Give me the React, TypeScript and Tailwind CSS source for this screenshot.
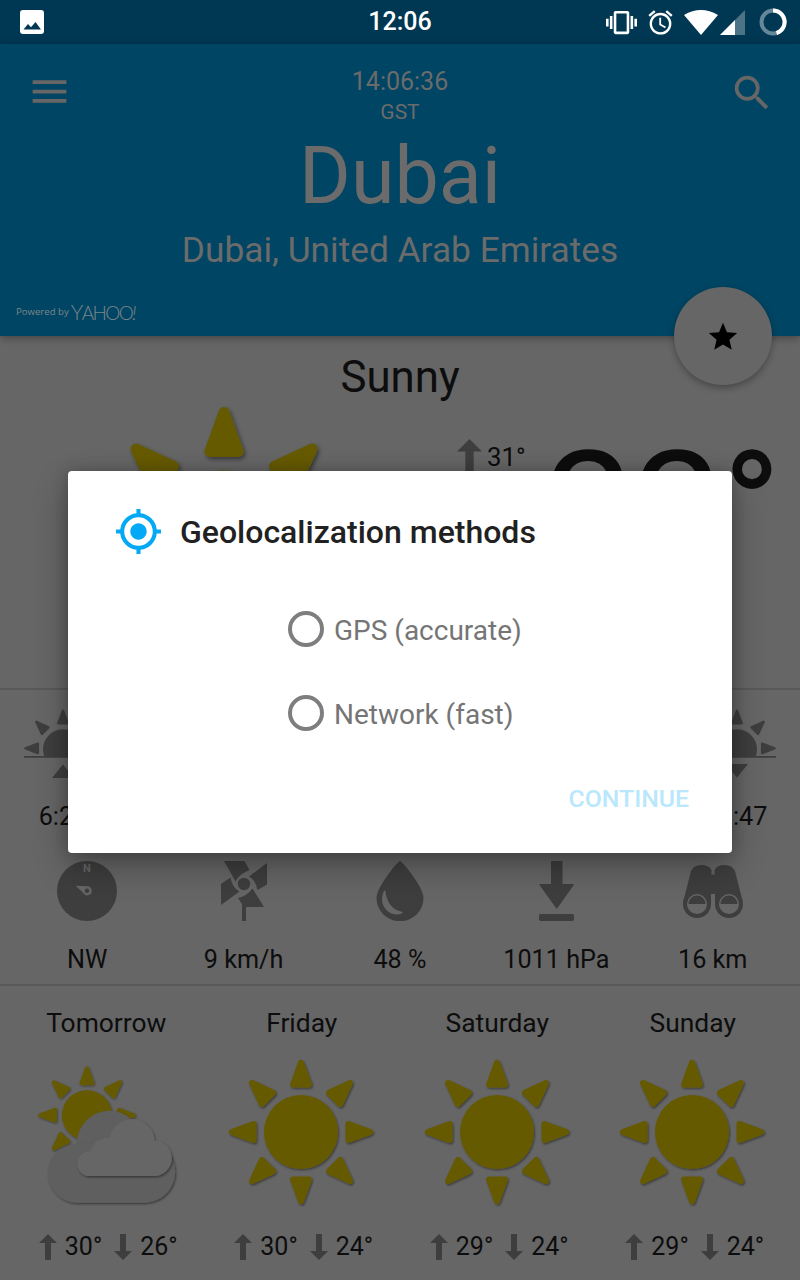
import type { ReactNode } from 'react';
import { MdAlarm, MdMenu, MdMyLocation, MdSearch, MdStar, MdVibration } from 'react-icons/md';

const RAY_ANGLES = [0, 45, 90, 135, 180, 225, 270, 315];

function SunShape({ id, scale = 1 }: { id: string; scale?: number }) {
  return (
    <g transform={`scale(${scale})`} filter={`url(#${id})`} fill="#665a00" stroke="#665a00">
      <circle r="37" stroke="none" />
      {RAY_ANGLES.map((a) => (
        <path
          key={a}
          d="M0-69.2 7.9-47.5H-7.9Z"
          strokeWidth="6"
          strokeLinejoin="round"
          transform={`rotate(${a})`}
        />
      ))}
    </g>
  );
}

function Shadow({ id }: { id: string }) {
  return (
    <filter id={id} x="-20%" y="-20%" width="140%" height="140%">
      <feDropShadow dx="1" dy="1.3" stdDeviation="1.2" floodColor="#000" floodOpacity="0.45" />
    </filter>
  );
}

function Sun({ id, className }: { id: string; className: string }) {
  return (
    <svg viewBox="-75 -75 150 150" className={className}>
      <defs>
        <Shadow id={id} />
      </defs>
      <SunShape id={id} />
    </svg>
  );
}

function PartlyCloudy({ className }: { className: string }) {
  return (
    <svg viewBox="32 1058 150 150" className={className}>
      <defs>
        <Shadow id="pc-sun" />
        <Shadow id="pc-cloud" />
      </defs>
      <g transform="translate(87 1115.3)">
        <SunShape id="pc-sun" scale={0.676} />
      </g>
      <g fill="#5e5e5e" filter="url(#pc-cloud)">
        <circle cx="77.200" cy="1173.200" r="29.500" />
        <circle cx="109.400" cy="1143.500" r="32.700" />
        <circle cx="144.500" cy="1172" r="30.700" />
        <path d="M77.200 1202.700V1143.700H144.500V1202.700Z" />
      </g>
      <g fill="#666666" filter="url(#pc-cloud)">
        <circle cx="89.500" cy="1163.700" r="12.300" />
        <circle cx="107.300" cy="1155" r="17.300" />
        <circle cx="132" cy="1141.700" r="22.700" />
        <circle cx="154" cy="1158.200" r="17.800" />
        <path d="M89.500 1176V1153L110 1145L150 1141L154 1176Z" />
      </g>
    </svg>
  );
}

function Arrow({ down = false, className }: { down?: boolean; className: string }) {
  return (
    <svg viewBox="0 0 18 26" className={className} fill="#3e3e3e">
      <path d={down ? 'M6 0h6v17h6l-9 9-9-9h6Z' : 'M9 0l9 9h-6v17H6V9H0Z'} />
    </svg>
  );
}

function Horizon({ set = false }: { set?: boolean }) {
  return (
    <svg viewBox="0 0 80 70" className="h-[70px] w-20" fill="#3e3e3e" stroke="#3e3e3e">
      <path stroke="none" d="M21.200 48A20 20 0 1 1 58.800 48Z" />
      <path stroke="none" d="M1 48h78v1.800H1Z" />
      {[-90, -45, 0, 45, 90].map((a) => (
        <path
          key={a}
          d="M0-37.500 4.600-25.200H-4.600Z"
          strokeWidth="2.600"
          strokeLinejoin="round"
          transform={`translate(40 40.400) rotate(${a})`}
        />
      ))}
      <path stroke="none" d={set ? 'M29 56h22l-11 13.500Z' : 'M40 56.500l11 13.500H29Z'} />
    </svg>
  );
}

function Compass() {
  return (
    <svg viewBox="0 0 60 60" className="size-[60px]">
      <circle cx="30" cy="30" r="30" fill="#3e3e3e" />
      <text x="30" y="10.800" textAnchor="middle" fontSize="11" fontWeight="700" fill="#666">
        N
      </text>
      <path d="M18.600 24.800 30 25.300A4.500 4.500 0 1 1 26.300 32Z" fill="#666" />
      <circle cx="30" cy="29.800" r="2.200" fill="#3e3e3e" />
    </svg>
  );
}

function Pinwheel() {
  return (
    <svg viewBox="0 0 60 60" className="size-[60px]" fill="#3e3e3e">
      <circle cx="30" cy="23" r="6.200" />
      <path d="M10 0H30.500L35.500 9Q24 14 21.500 20.500Z" />
      <path d="M53 2V23.500L43.500 29Q41.500 19 35 15.500Z" />
      <path d="M7 23 16.500 16.500Q18 26.500 25.500 30.500L7 44Z" />
      <path d="M24 37Q33 35 38.500 27.500L50 46H32V60H28V43Z" />
    </svg>
  );
}

function Drop() {
  return (
    <svg viewBox="0 0 60 60" className="size-[60px]">
      <path
        d="M30 0C32 0 53.500 26 53.500 37A23.500 23.200 0 0 1 6.500 37C6.500 26 28 0 30 0Z"
        fill="#3e3e3e"
      />
      <path
        d="M14.500 29.500C16 29.500 15.500 31 16 34C18.500 44 24 49 31 50.500C33 51 33 52 32 52.500C23 56 13 50 12 39C12 35 13.500 29.500 14.500 29.500Z"
        fill="#666"
      />
    </svg>
  );
}

function Pressure() {
  return (
    <svg viewBox="0 0 60 60" className="size-[60px]" fill="#3e3e3e">
      <path d="M25.500 0H35.500Q36.500 0 36.500 1V23H47.300Q48.300 23 47.700 24L31.500 47Q30.700 48.200 30 47L13.500 24Q13 23 14 23H25V1Q25 0 25.500 0Z" />
      <rect x="13" y="53" width="35" height="7" rx="1.800" />
    </svg>
  );
}

function Binoculars() {
  return (
    <svg viewBox="0 0 60 60" className="size-[60px]" fill="#3e3e3e">
      <path d="M8 10Q11 4 18 4Q26 4 28.500 9V13.500H31.500V9Q34 4 42 4Q49 4 52 10L59.600 40L46 45L32 43V33H28V43L14 45L.4 40Z" />
      <circle cx="14" cy="43" r="14" />
      <circle cx="46" cy="43" r="14" />
      <g fill="#666">
        <circle cx="14" cy="43" r="10" />
        <circle cx="46" cy="43" r="10" />
      </g>
      <path d="M5.500 43a8.500 8.500 0 0 1 17 0ZM37.500 43a8.500 8.500 0 0 1 17 0Z" />
    </svg>
  );
}

function StatusBar() {
  return (
    <div className="relative flex h-11 shrink-0 items-center justify-between bg-[#003752] text-white">
      <svg viewBox="0 0 24 24" className="ml-5 size-6">
        <rect width="24" height="24" rx="3" fill="#fff" />
        <path d="M3.500 19.500 8 14l3 3.300 4.500-5.300 5.500 7.500Z" fill="#003752" />
      </svg>
      <div className="absolute inset-x-0 text-center text-[25px] leading-[50px] font-medium">12:06</div>
      <div className="flex items-center">
        <MdVibration className="mt-px size-[31px]" />
        <MdAlarm className="ml-[9px] size-[29px]" />
        <svg viewBox="0 0 34 25" className="ml-[9px] h-[25px] w-[34px]" fill="#fff">
          <path d="M0 5Q17-5 34 5L17 25Z" />
        </svg>
        <svg viewBox="0 0 25 25" className="ml-[2px] size-[25px]">
          <path d="M25 0V25H0Z" fill="#4d7386" />
          <path d="M15 10V25H0Z" fill="#fff" />
        </svg>
        <svg viewBox="0 0 28 28" className="mr-[13px] ml-[14px] size-7" fill="none" strokeWidth="4">
          <circle cx="14" cy="14" r="11.500" stroke="#668799" />
          <path d="M14 2.500A11.500 11.500 0 0 1 17.500 25" stroke="#fff" />
        </svg>
      </div>
    </div>
  );
}

function Header() {
  return (
    <header className="relative z-10 flex h-[292px] shrink-0 items-start justify-between bg-[#004563] text-[#6b6b6b] shadow-[0_2px_8px_rgba(0,0,0,0.35)]">
      <MdMenu className="mt-[25px] ml-[26.500px] size-[45px] text-[#666]" />
      <div className="flex flex-col items-center pt-[22px]">
        <div className="text-[25px] leading-[31px]">14:06:36</div>
        <div className="text-[21px] leading-[30px]">GST</div>
        <div className="mt-px text-[79px] leading-[96px]">Dubai</div>
        <div className="mt-[4px] text-[35.300px] leading-[44px]">Dubai, United Arab Emirates</div>
      </div>
      <MdSearch className="mt-[26px] mr-[25.500px] size-[46px] text-[#666]" />
      <div className="absolute bottom-[14px] left-4 flex items-center text-[#7b858c]">
        <span className="font-['Open_Sans'] text-[9.600px] leading-none">Powered by</span>
        <span className="ml-[2px] font-['Lato'] text-[19px] leading-none font-light tracking-[-1.600px]">
          <span className="text-[21px]">Y</span>AHOO<i>!</i>
        </span>
      </div>
      <div className="absolute right-7 -bottom-[49px] flex size-[98px] items-center justify-center rounded-full bg-[#666] shadow-[0_3px_7px_rgba(0,0,0,0.3)]">
        <MdStar className="mt-[2px] size-[34px] text-black" />
      </div>
    </header>
  );
}

function Current() {
  return (
    <section className="flex h-[354px] shrink-0 flex-col border-b-2 border-[#595959]">
      <div className="pt-[14px] text-center text-[43.800px] leading-[54px]">Sunny</div>
      <div className="flex">
        <Sun id="sun-now" className="-mt-[2px] ml-[89px] size-[270px]" />
        <div className="mt-[35px] ml-[98px] flex h-9">
          <Arrow className="h-9 w-[25px]" />
          <span className="ml-[5px] text-[25.800px] leading-9">31°</span>
        </div>
        <div className="mt-[26px] ml-[19px] text-[158px] leading-[158px] whitespace-nowrap">22°</div>
      </div>
    </section>
  );
}

function Stat({ icon, label }: { icon: ReactNode; label: string }) {
  return (
    <div className="flex w-[156.400px] flex-col items-center">
      {icon}
      <span className="mt-[24px] leading-[30px]">{label}</span>
    </div>
  );
}

function Details() {
  return (
    <section className="flex h-[296px] shrink-0 flex-col justify-between border-b-2 border-[#595959] pt-[18px] pb-[9px] text-[25.200px]">
      <div className="flex justify-between px-[23px]">
        <div className="flex flex-col items-center">
          <Horizon />
          <span className="mt-[24px] leading-[30px]">6:24</span>
        </div>
        <div className="flex flex-col items-center">
          <Horizon set />
          <span className="mt-[24px] mr-[2px] leading-[30px]">17:47</span>
        </div>
      </div>
      <div className="flex pl-[9px]">
        <Stat icon={<Compass />} label="NW" />
        <Stat icon={<Pinwheel />} label="9 km/h" />
        <Stat icon={<Drop />} label="48 %" />
        <Stat icon={<Pressure />} label="1011 hPa" />
        <Stat icon={<Binoculars />} label="16 km" />
      </div>
    </section>
  );
}

const DAYS = [
  { name: 'Tomorrow', hi: 30, lo: 26 },
  { name: 'Friday', hi: 30, lo: 24 },
  { name: 'Saturday', hi: 29, lo: 24 },
  { name: 'Sunday', hi: 29, lo: 24 },
];

function Forecast() {
  return (
    <section className="grid flex-1 grid-cols-4 pt-[22px] pr-[10px] pl-[8px]">
      {DAYS.map((d, i) => (
        <div key={d.name} className="flex flex-col items-center">
          <span className="pl-px text-[26.400px] leading-[30px]">{d.name}</span>
          {i === 0 ? (
            <PartlyCloudy className="mt-[20px] mb-[23px] ml-[2.500px] size-[150px]" />
          ) : (
            <Sun id={`sun-${i}`} className="mt-[19px] mb-[24px] size-[150px]" />
          )}
          <div className="flex items-center pl-[5px] text-[25px] leading-[30px]">
            <Arrow className="mr-2 h-[26px] w-[18px]" />
            <span className="pt-px">{d.hi}°</span>
            <Arrow down className="mr-2 ml-3 h-[26px] w-[18px]" />
            <span className="pt-px">{d.lo}°</span>
          </div>
        </div>
      ))}
    </section>
  );
}

function Option({ label }: { label: string }) {
  return (
    <label className="flex h-[84px] items-center">
      <span className="size-[36px] rounded-full border-[4px] border-[#7e7e7e]" />
      <span className="ml-[10px] pt-[3px] text-[28px] leading-9 text-[#757575]">{label}</span>
    </label>
  );
}

function Dialog() {
  return (
    <div
      role="dialog"
      className="absolute top-[471px] left-[68px] z-20 flex h-[382px] w-[664px] flex-col rounded-[4px] bg-white shadow-[0_14px_34px_rgba(0,0,0,0.3),0_0_16px_rgba(0,0,0,0.2)]"
    >
      <div className="flex items-center pt-[36px] pl-[46px]">
        <MdMyLocation className="size-[49px] text-[#03a9f4]" />
        <h1 className="ml-[17px] text-[32px] leading-10 font-medium text-[#212121]">
          Geolocalization methods
        </h1>
      </div>
      <div className="mt-[31px] ml-[220px] flex flex-col">
        <Option label="GPS (accurate)" />
        <Option label="Network (fast)" />
      </div>
      <button className="mt-[29px] mr-[43px] self-end text-[24.800px] leading-[30px] font-medium text-[#b9e7fc]">
        CONTINUE
      </button>
    </div>
  );
}

export default function App() {
  return (
    <div className="relative flex h-[1280px] w-[800px] flex-col overflow-hidden bg-[#666] font-['Roboto',sans-serif] text-[#0d0d0d]">
      <StatusBar />
      <Header />
      <Current />
      <Details />
      <Forecast />
      <Dialog />
    </div>
  );
}
